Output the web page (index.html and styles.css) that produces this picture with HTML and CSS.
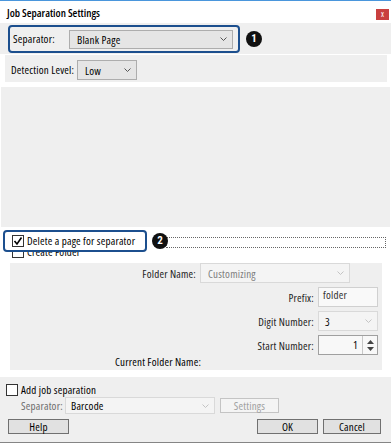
FILE: index.html
```html
<!DOCTYPE html>
<html lang="en">
<head>
<meta charset="UTF-8">
<meta name="viewport" content="width=device-width, initial-scale=1.0">
<title>Job Separation Settings</title>
<link rel="stylesheet" href="styles.css">
</head>
<body>
<div class="window">
  <div class="titlebar">
    <span class="title">Job Separation Settings</span>
    <span class="close">x</span>
  </div>

  <div class="sep-row">
    <div class="callout callout-sep">
      <span class="label label-sep">Separator:</span>
      <div class="combo combo-sep">
        <span>Blank Page</span>
        <svg class="chev" width="7" height="4" viewBox="0 0 7 4"><polyline points="0.5,0.5 3.5,3.5 6.5,0.5" fill="none" stroke="#555" stroke-width="1"/></svg>
      </div>
    </div>
    <span class="badge badge-1">1</span>
  </div>

  <div class="det-row">
    <span class="label label-det">Detection Level:</span>
    <div class="combo combo-det">
      <span>Low</span>
      <svg class="chev" width="7" height="4" viewBox="0 0 7 4"><polyline points="0.5,0.5 3.5,3.5 6.5,0.5" fill="none" stroke="#555" stroke-width="1"/></svg>
    </div>
  </div>

  <div class="preview"></div>

  <div class="options">
    <div class="check-row create-row">
      <span class="checkbox"></span>
      <span class="check-text">Create Folder</span>
    </div>
    <!-- highlighted callout drawn over the options -->
    <div class="delete-overlay">
      <div class="callout callout-del">
        <span class="checkbox checked">
          <svg width="10" height="10" viewBox="0 0 10 10"><polyline points="1.5,5 4,8 8.5,1.5" fill="none" stroke="#000" stroke-width="1.6"/></svg>
        </span>
        <span class="check-text">Delete a page for separator</span>
      </div>
      <span class="badge badge-2">2</span>
      <span class="focus-rect"></span>
    </div>
  </div>

  <div class="folder-group">
    <div class="field-row">
      <span class="field-label">Folder Name:</span>
      <div class="combo combo-folder disabled">
        <span>Customizing</span>
        <svg class="chev" width="7" height="4" viewBox="0 0 7 4"><polyline points="0.5,0.5 3.5,3.5 6.5,0.5" fill="none" stroke="#c4c4c4" stroke-width="1"/></svg>
      </div>
    </div>
    <div class="field-row">
      <span class="field-label">Prefix:</span>
      <div class="textbox">folder</div>
    </div>
    <div class="field-row">
      <span class="field-label">Digit Number:</span>
      <div class="combo combo-digit disabled">
        <span class="dark">3</span>
        <svg class="chev" width="7" height="4" viewBox="0 0 7 4"><polyline points="0.5,0.5 3.5,3.5 6.5,0.5" fill="none" stroke="#c4c4c4" stroke-width="1"/></svg>
      </div>
    </div>
    <div class="field-row">
      <span class="field-label">Start Number:</span>
      <div class="spinbox">
        <span class="spin-value">1</span>
        <div class="spin-buttons">
          <svg width="7" height="4" viewBox="0 0 7 4"><polygon points="0,4 3.5,0 7,4" fill="#444"/></svg>
          <svg width="7" height="4" viewBox="0 0 7 4"><polygon points="0,0 3.5,4 7,0" fill="#444"/></svg>
        </div>
      </div>
    </div>
    <div class="current-row">Current Folder Name:</div>
  </div>

  <div class="footer">
    <div class="check-row add-row">
      <span class="checkbox"></span>
      <span class="check-text">Add job separation</span>
    </div>
    <div class="footer-sep">
      <span class="label label-foot">Separator:</span>
      <div class="combo combo-barcode disabled">
        <span class="dark">Barcode</span>
        <svg class="chev" width="7" height="4" viewBox="0 0 7 4"><polyline points="0.5,0.5 3.5,3.5 6.5,0.5" fill="none" stroke="#c4c4c4" stroke-width="1"/></svg>
      </div>
      <button class="btn btn-settings" disabled>Settings</button>
    </div>
    <div class="footer-buttons">
      <button class="btn btn-help">Help</button>
      <div class="right-buttons">
        <button class="btn btn-ok">OK</button>
        <button class="btn btn-cancel">Cancel</button>
      </div>
    </div>
  </div>
</div>
</body>
</html>
```

FILE: styles.css
```css
html, body {
  margin: 0;
  padding: 0;
  background: #fff;
}
* {
  box-sizing: border-box;
}
.window {
  width: 391px;
  height: 443px;
  font-family: "Open Sans", sans-serif;
  font-stretch: 75%;
  font-size: 11px;
  letter-spacing: 0.2px;
  color: #000;
  background: #fff;
  white-space: nowrap;
}

/* title bar */
.titlebar {
  height: 23px;
  border-top: 1px solid #4a96dc;
  display: flex;
  justify-content: space-between;
  align-items: flex-start;
  padding-left: 7px;
}
.title {
  margin-top: 5px;
  line-height: 13px;
  letter-spacing: 0;
  font-weight: 600;
}
.close {
  margin-top: 8px;
  margin-right: 2px;
  width: 13px;
  height: 11px;
  background: #c9403f;
  color: #fff;
  font-size: 8px;
  line-height: 10px;
  text-align: center;
}

/* highlight callouts */
.callout {
  border: 2px solid #1c4f8e;
  border-radius: 4px;
  display: flex;
  align-items: center;
  background: inherit;
}
.badge {
  width: 16px;
  height: 16px;
  border-radius: 50%;
  background: #111;
  color: #fff;
  font-family: Roboto, sans-serif;
  font-weight: 700;
  font-size: 11px;
  letter-spacing: 0;
  line-height: 16px;
  text-align: center;
  flex-shrink: 0;
}

/* separator row */
.sep-row {
  height: 31px;
  background: #efefef;
  display: flex;
  align-items: flex-start;
  padding: 2px 0 0 8px;
}
.callout-sep {
  width: 232px;
  height: 28px;
  padding-left: 3px;
}
.label {
  line-height: 20px;
  flex-shrink: 0;
}
.label-sep {
  width: 56px;
}
.badge-1 {
  margin: 6px 0 0 6px;
}

/* combo boxes */
.combo {
  height: 20px;
  border: 1px solid #adadad;
  background: #e5e5e5;
  display: flex;
  align-items: center;
  justify-content: space-between;
  padding: 0 5px 0 7px;
}
.combo.disabled {
  background: #f4f4f4;
  border-color: #d9d9d9;
  color: #7d7d7d;
}
.combo .dark {
  color: #000;
}
.combo-sep {
  width: 164px;
  height: 19px;
}
.combo-det {
  width: 60px;
}

/* detection row */
.det-row {
  margin: 1px 4px 0 5px;
  height: 27px;
  background: #efefef;
  display: flex;
  align-items: flex-start;
  padding: 5px 0 0 6px;
}
.label-det {
  width: 66px;
}

.preview {
  margin: 5px 1px 0;
  height: 140px;
  background: #efefef;
}

/* checkbox rows */
.options {
  position: relative;
  height: 36px;
  padding-top: 19px;
}
.check-row {
  display: flex;
  align-items: center;
  height: 12px;
}
.checkbox {
  width: 12px;
  height: 12px;
  border: 1px solid #333;
  background: #fff;
  display: flex;
  align-items: center;
  justify-content: center;
  flex-shrink: 0;
}
.check-text {
  margin-left: 3px;
  line-height: 12px;
}
.create-row {
  padding-left: 12px;
}
.delete-overlay {
  position: absolute;
  top: 3px;
  left: 3px;
  display: flex;
  align-items: center;
}
.callout-del {
  width: 144px;
  height: 22px;
  padding-left: 7px;
  background: #fff;
}
.badge-2 {
  margin-left: 5px;
  position: relative;
  z-index: 1;
}
.focus-rect {
  width: 220px;
  height: 11px;
  margin: 2px 0 0 -2px;
  border: 1px dotted #666;
}

/* folder group */
.folder-group {
  margin: 0 9px 0 10px;
  height: 107px;
  background: #efefef;
  display: flex;
  flex-direction: column;
  align-items: flex-end;
  gap: 4px;
  padding-right: 4px;
}
.field-row {
  display: flex;
  align-items: center;
  height: 20px;
  gap: 4px;
}
.field-label {
  color: #222;
}
.combo-folder {
  width: 150px;
  margin-right: 28px;
}
.combo-digit {
  width: 60px;
  padding-left: 6px;
}
.textbox {
  width: 60px;
  height: 20px;
  border: 1px solid #d0d0d0;
  background: #f9f9f9;
  padding: 0 4px;
  line-height: 14px;
  color: #333;
}
.spinbox {
  width: 60px;
  height: 20px;
  border: 1px solid #a0a0a0;
  background: #f8f8f8;
  display: flex;
  align-items: stretch;
}
.spin-value {
  flex: 1;
  text-align: right;
  padding-right: 4px;
  line-height: 18px;
}
.spin-buttons {
  width: 15px;
  border-left: 1px solid #c8c8c8;
  display: flex;
  flex-direction: column;
  justify-content: space-around;
  align-items: center;
  padding: 2px 0;
}
.current-row {
  align-self: flex-start;
  margin-top: -3px;
  padding-left: 105px;
  line-height: 12px;
}

/* footer */
.footer {
  margin-top: 7px;
  height: 66px;
  background: #efefef;
  border-bottom: 1px solid #858585;
  padding: 7px 10px 0 6px;
}
.footer-sep {
  margin-top: 1px;
  padding-left: 15px;
  display: flex;
  align-items: flex-start;
}
.label-foot {
  width: 44px;
  line-height: 17px;
  color: #6d6d6d;
}
.combo-barcode {
  width: 150px;
  height: 17px;
  padding-left: 5px;
}
.btn {
  height: 15px;
  border: 1px solid #707070;
  background: #e1e1e1;
  font-family: inherit;
  font-stretch: inherit;
  letter-spacing: inherit;
  font-size: 11px;
  line-height: 13px;
  padding: 0;
  color: #000;
}
.btn-settings {
  margin: 1px 0 0 5px;
  width: 59px;
  background: #f4f4f4;
  border-color: #c4c4c4;
  color: #a0a0a0;
}
.footer-buttons {
  margin-top: 5px;
  display: flex;
  justify-content: space-between;
  padding-left: 2px;
}
.btn-help {
  width: 61px;
}
.right-buttons {
  display: flex;
  gap: 5px;
}
.btn-ok {
  width: 61px;
}
.btn-cancel {
  width: 58px;
}
```
